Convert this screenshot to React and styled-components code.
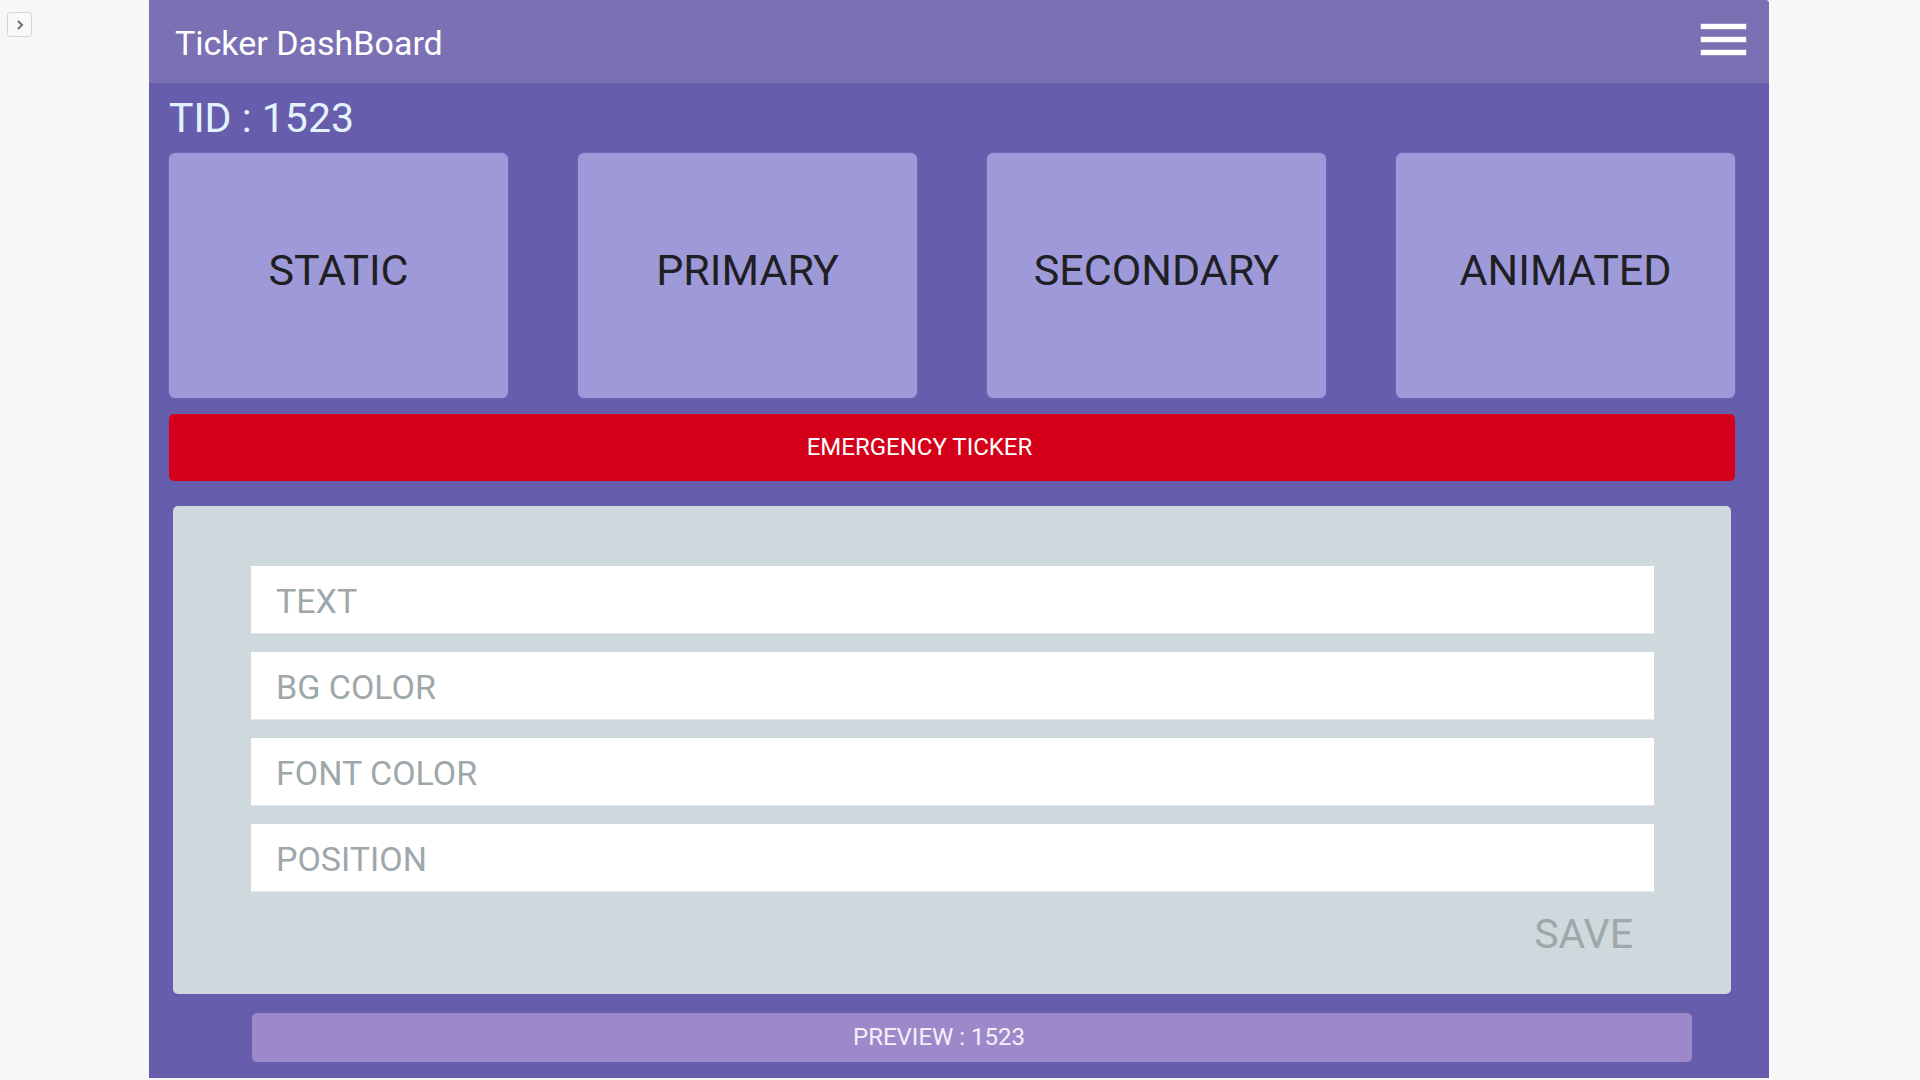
import React from "react";
import styled, { createGlobalStyle } from "styled-components";

const Global = createGlobalStyle`
  html, body { margin: 0; padding: 0; background: #f7f7f7; }
  body { font-family: Roboto, "Liberation Sans", Arial, sans-serif; }
  * { box-sizing: border-box; }
`;

const Page = styled.div`
  display: flex;
  align-items: flex-start;
  min-height: 1080px;
`;

const Side = styled.div`
  width: 149px;
  flex: none;
  padding: 12px 0 0 7px;
`;

const Toggle = styled.button`
  width: 25px;
  height: 25px;
  padding: 0;
  display: flex;
  align-items: center;
  justify-content: center;
  background: #f8f8f8;
  border: 1px solid #d6d6d6;
  border-radius: 3px;
  color: #777;
`;

const Panel = styled.div`
  width: 1620px;
  height: 1078px;
  flex: none;
  background: #665eac;
  border-radius: 0 4px 0 0;
  display: flex;
  flex-direction: column;
  overflow: hidden;
`;

const Header = styled.header`
  height: 83px;
  flex: none;
  background: #7b70b3;
  display: flex;
  align-items: center;
  justify-content: space-between;
  padding: 2px 23px 0 26px;
`;

const Title = styled.h1`
  margin: 0;
  font-size: 34px;
  font-weight: 400;
  color: #ffffff;
`;

const Burger = styled.div`
  width: 45px;
  display: flex;
  flex-direction: column;
  gap: 8px;
  margin-top: -7px;
`;

const BurgerLine = styled.span`
  display: block;
  height: 5px;
  background: #ffffff;
  box-shadow: 0 0 0 0.5px rgba(255, 255, 255, 0.4);
`;

const Body = styled.main`
  flex: 1;
  display: flex;
  flex-direction: column;
  padding: 11px 34px 16px 20px;
`;

const Tid = styled.div`
  font-size: 41px;
  line-height: 48px;
  color: #e3f2fd;
  margin-bottom: 11px;
`;

const Cards = styled.div`
  display: flex;
  justify-content: space-between;
`;

const Card = styled.button`
  width: 339px;
  height: 245px;
  border: none;
  border-radius: 6px;
  background: #9e9ad9;
  box-shadow: 0 0 0 1px rgba(120, 115, 200, 0.35);
  display: flex;
  align-items: center;
  justify-content: center;
  padding: 0 0 12px;
  font-family: Roboto, "Liberation Sans", Arial, sans-serif;
  font-size: 43px;
  font-weight: 400;
  color: #1f1f24;
  cursor: pointer;
`;

const Emergency = styled.button`
  margin-top: 16px;
  height: 67px;
  border: none;
  border-radius: 5px;
  background: #d40019;
  color: #ffffff;
  font-family: Roboto, "Liberation Sans", Arial, sans-serif;
  font-size: 24px;
  display: flex;
  align-items: center;
  justify-content: center;
  padding: 0 65px 2px 0;
`;

const Form = styled.section`
  margin: 25px 4px 0;
  height: 488px;
  background: #cfd8dc;
  border-radius: 5px;
  padding: 60px 77px 0 78px;
  display: flex;
  flex-direction: column;
  gap: 19px;
`;

const Field = styled.input`
  height: 67px;
  border: none;
  outline: none;
  background: #ffffff;
  box-shadow: 0 1px 0 #e4e8ea;
  padding: 3px 25px 0;
  font-family: Roboto, "Liberation Sans", Arial, sans-serif;
  font-size: 34px;
  color: #333;
  &::placeholder {
    color: #9ea7aa;
  }
`;

const SaveRow = styled.div`
  display: flex;
  justify-content: flex-end;
  padding-right: 21px;
`;

const Save = styled.button`
  border: none;
  background: transparent;
  padding: 0;
  font-family: Roboto, "Liberation Sans", Arial, sans-serif;
  font-size: 41px;
  line-height: 48px;
  color: #9ea7aa;
`;

const Preview = styled.div`
  margin: 19px 43px 0 83px;
  height: 49px;
  border-radius: 5px;
  background: #9d89ca;
  color: #f4f0fb;
  font-size: 24px;
  display: flex;
  align-items: center;
  justify-content: center;
  padding: 0 66px 1px 0;
`;

const types = ["STATIC", "PRIMARY", "SECONDARY", "ANIMATED"];
const fields = ["TEXT", "BG COLOR", "FONT COLOR", "POSITION"];

export default function App() {
  return (
    <>
      <Global />
      <Page>
        <Side>
          <Toggle aria-label="open">
            <svg width="12" height="12" viewBox="0 0 12 12">
              <path d="M4 2 L8 6 L4 10" fill="none" stroke="#6f6f6f" strokeWidth="2" />
            </svg>
          </Toggle>
        </Side>
        <Panel>
          <Header>
            <Title>Ticker DashBoard</Title>
            <Burger>
              <BurgerLine />
              <BurgerLine />
              <BurgerLine />
            </Burger>
          </Header>
          <Body>
            <Tid>TID : 1523</Tid>
            <Cards>
              {types.map((t) => (
                <Card key={t}>{t}</Card>
              ))}
            </Cards>
            <Emergency>EMERGENCY TICKER</Emergency>
            <Form>
              {fields.map((f) => (
                <Field key={f} placeholder={f} />
              ))}
              <SaveRow>
                <Save>SAVE</Save>
              </SaveRow>
            </Form>
            <Preview>PREVIEW : 1523</Preview>
          </Body>
        </Panel>
      </Page>
    </>
  );
}
